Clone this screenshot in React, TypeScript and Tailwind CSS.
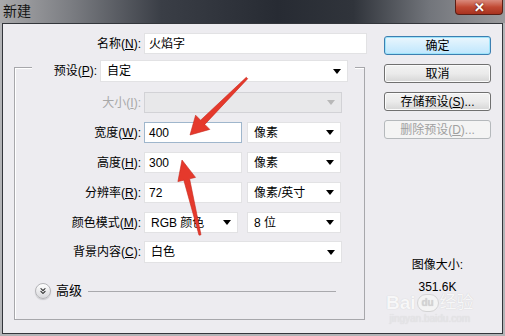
import React from 'react';
import { ChevronsDown } from 'lucide-react';

function Caret({ disabled }: { disabled?: boolean }) {
  return (
    <span
      className={
        disabled
          ? 'w-0 h-0 border-l-[4px] border-r-[4px] border-t-[5px] border-l-transparent border-r-transparent border-t-[#b8b8b8]'
          : 'w-0 h-0 border-l-[4px] border-r-[4px] border-t-[5px] border-l-transparent border-r-transparent border-t-black'
      }
    />
  );
}

function Select({ value, w, h = 'h-[21px]', disabled }: { value: string; w: string; h?: string; disabled?: boolean }) {
  return (
    <div
      className={`${w} ${h} flex items-center justify-between pl-[6px] pr-[6px] border ${
        disabled ? 'bg-[#e8e8ea] border-[#d2d2d6]' : 'bg-white border-[#e2e2e4]'
      }`}
    >
      <span>{value}</span>
      <Caret disabled={disabled} />
    </div>
  );
}

function TextInput({ value, w, focused }: { value: string; w: string; focused?: boolean }) {
  return (
    <div
      className={`${w} h-[21px] flex items-center pl-[4px] bg-white border ${
        focused ? 'border-[#9fb6cc]' : 'border-[#e2e2e4]'
      }`}
    >
      {value}
    </div>
  );
}

function Label({ children, w, disabled }: { children: React.ReactNode; w: string; disabled?: boolean }) {
  return (
    <div className={`${w} text-right pr-[3px] ${disabled ? 'text-[#a8a8a8]' : 'text-black'}`}>{children}</div>
  );
}

function Btn({ children, kind }: { children: React.ReactNode; kind?: 'default' | 'disabled' }) {
  if (kind === 'default') {
    return (
      <div className="h-[19px] w-[107px] flex items-center justify-center rounded-[3px] border border-[#3c7fb1] bg-gradient-to-b from-[#eaf6fd] to-[#bee6fd] shadow-[inset_0_0_0_1px_#9ee4fa]">
        {children}
      </div>
    );
  }
  if (kind === 'disabled') {
    return (
      <div className="h-[19px] w-[107px] flex items-center justify-center rounded-[3px] border border-[#b5b9bc] bg-[#f4f4f4] text-[#a0a0a0]">
        {children}
      </div>
    );
  }
  return (
    <div className="h-[19px] w-[107px] flex items-center justify-center rounded-[3px] border border-[#707070] bg-gradient-to-b from-[#f2f2f2] via-[#ebebeb] to-[#d6d6d6] shadow-[inset_0_0_0_1px_#fbfbfb]">
      {children}
    </div>
  );
}

export default function App() {
  return (
    <div className="relative w-[505px] h-[336px] overflow-hidden bg-[#b3b4b7] flex flex-col font-['Liberation_Sans','Noto_Sans_CJK_SC',sans-serif] text-[12px] leading-[16px] text-black">
      {/* Title bar */}
      <div className="h-[23px] shrink-0 flex justify-between bg-[linear-gradient(to_right,#a9a9ab_0%,#7b7d82_14%,#3a3e46_32%,#272b33_55%,#30343b_70%,#72757b_85%,#9a9a9d_100%)]">
        <div className="pl-[3px] pt-[2px] text-[14px] leading-[18px] text-[#141414]">新建</div>
        <div className="mr-[2px] w-[48px] h-[15px] rounded-b-[4px] border border-t-0 border-[#5a1d14] bg-gradient-to-b from-[#d98a7c] via-[#c14a34] to-[#a8321f] flex items-center justify-center">
          <span className="text-white text-[13px] leading-[13px] font-bold [text-shadow:0_0_2px_#3a0a00]">✕</span>
        </div>
      </div>

      {/* Window frame */}
      <div className="flex-1 px-[2px] pb-[2px] flex">
        <div className="flex-1 flex border border-[#33363b] bg-[#edecf0]">
          {/* Left column */}
          <div className="flex flex-col w-[364px] shrink-0">
            <div className="mt-[9px] h-[21px] flex items-center">
              <Label w="w-[141px]">
                名称(<span className="underline">N</span>):
              </Label>
              <TextInput value="火焰字" w="w-[223px]" />
            </div>

            <div className="mt-[13px] ml-[11px] w-[351px] h-[253px] border border-[#a7a7ab] shadow-[inset_1px_1px_0_#ffffff] flex flex-col">
              {/* preset row over the group line */}
              <div className="-mt-[8px] ml-[17px] self-start flex items-center bg-[#edecf0] pr-[7px]">
                <Label w="w-[68px]">
                  预设(<span className="underline">P</span>):
                </Label>
                <Select value="自定" w="w-[248px]" h="h-[22px]" />
              </div>

              <div className="mt-[10px] h-[21px] flex items-center">
                <Label w="w-[129px]" disabled>
                  大小(<span className="underline">I</span>):
                </Label>
                <Select value="" w="w-[198px]" disabled />
              </div>

              <div className="mt-[9px] h-[21px] flex items-center">
                <Label w="w-[129px]">
                  宽度(<span className="underline">W</span>):
                </Label>
                <TextInput value="400" w="w-[98px]" focused />
                <div className="ml-[5px]">
                  <Select value="像素" w="w-[94px]" />
                </div>
              </div>

              <div className="mt-[9px] h-[21px] flex items-center">
                <Label w="w-[129px]">
                  高度(<span className="underline">H</span>):
                </Label>
                <TextInput value="300" w="w-[98px]" />
                <div className="ml-[5px]">
                  <Select value="像素" w="w-[94px]" />
                </div>
              </div>

              <div className="mt-[9px] h-[21px] flex items-center">
                <Label w="w-[129px]">
                  分辨率(<span className="underline">R</span>):
                </Label>
                <TextInput value="72" w="w-[98px]" />
                <div className="ml-[5px]">
                  <Select value="像素/英寸" w="w-[94px]" />
                </div>
              </div>

              <div className="mt-[9px] h-[21px] flex items-center">
                <Label w="w-[129px]">
                  颜色模式(<span className="underline">M</span>):
                </Label>
                <Select value="RGB 颜色" w="w-[94px]" />
                <div className="ml-[9px]">
                  <Select value="8 位" w="w-[94px]" />
                </div>
              </div>

              <div className="mt-[8px] h-[22px] flex items-center">
                <Label w="w-[129px]">
                  背景内容(<span className="underline">C</span>):
                </Label>
                <Select value="白色" w="w-[198px]" h="h-[22px]" />
              </div>

              <div className="mt-[20px] h-[16px] flex items-center pl-[20px]">
                <div className="w-[16px] h-[16px] rounded-full border border-[#b4b4b8] bg-gradient-to-b from-white to-[#d8d8dc] flex items-center justify-center shadow-[0_1px_1px_#c8c8cc]">
                  <ChevronsDown size={10} strokeWidth={2.5} color="#222" />
                </div>
                <span className="ml-[5px] text-[13px]">高级</span>
                <div className="ml-[6px] w-[248px] h-px bg-[#a9a9ad]" />
              </div>
            </div>
          </div>

          {/* Right column */}
          <div className="ml-[17px] w-[107px] flex flex-col">
            <div className="mt-[12px] flex flex-col gap-[9px]">
              <Btn kind="default">确定</Btn>
              <Btn>取消</Btn>
              <Btn>
                存储预设(<span className="underline">S</span>)...
              </Btn>
              <Btn kind="disabled">
                删除预设(<span className="underline">D</span>)...
              </Btn>
            </div>
            <div className="mt-auto pb-[38px] flex flex-col items-center gap-[6px]">
              <div>图像大小:</div>
              <div>351.6K</div>
            </div>
          </div>
        </div>
      </div>

      {/* Watermark */}
      <div className="absolute left-[386px] top-[293px] flex flex-col items-center pointer-events-none opacity-80">
        <div className="flex items-center text-[#fafafa] text-[19px] leading-[20px] font-bold [text-shadow:0_0_1px_#c4c4c4]">
          <span>Bai</span>
          <span className="mx-[1px] w-[22px] h-[18px] rounded-full bg-[#f6f6f6] border border-[#cfcfcf] text-[10px] leading-[16px] text-[#cccccc] flex items-center justify-center">du</span>
          <span className="text-[17px] font-normal">经验</span>
        </div>
        <div className="text-[10px] leading-[12px] text-[#e4e4e6] [text-shadow:0_0_1px_#d0d0d0]">jingyan.baidu.com</div>
      </div>

      {/* Annotation arrows */}
      <svg className="absolute left-0 top-0 pointer-events-none" width="505" height="336" viewBox="0 0 505 336">
        <polygon
          points="246.3,77.3 200.6,120.2 195.6,115.2 190,135 209.8,129.4 204.8,124.4 247.7,78.7"
          fill="#e5392c"
          stroke="#c8281d"
          strokeWidth="0.6"
        />
        <polygon
          points="199,235.2 183.8,180.2 177.9,181.6 182,160 195.5,177.4 189.6,178.8 201,234.8"
          fill="#e5392c"
          stroke="#c8281d"
          strokeWidth="0.6"
        />
      </svg>
    </div>
  );
}
